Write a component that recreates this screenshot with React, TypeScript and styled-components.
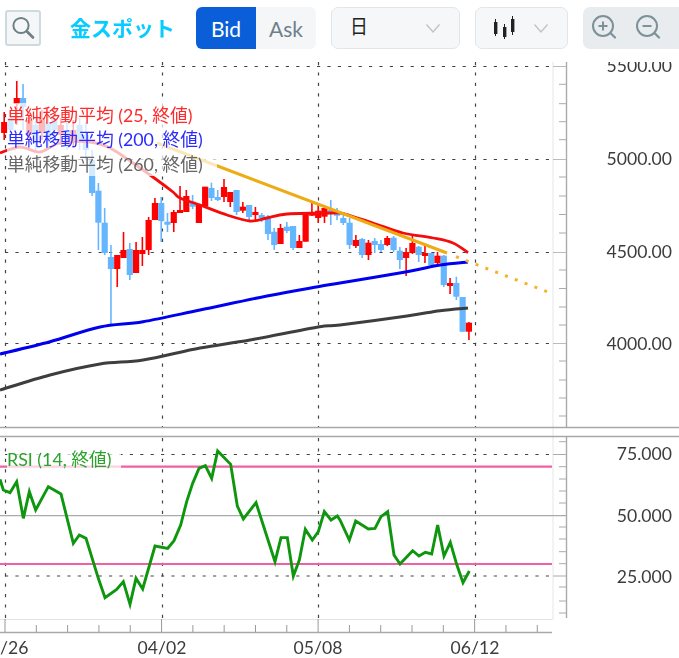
import React from "react";
import styled, { createGlobalStyle } from "styled-components";

const Global = createGlobalStyle`
  html, body { margin: 0; padding: 0; background: #fff; overflow: hidden; }
  #root { width: 679px; height: 658px; }
`;

const LATIN = `Lato, "Noto Sans CJK JP", sans-serif`;

const Page = styled.div`
  width: 679px;
  height: 658px;
  display: flex;
  flex-direction: column;
  font-family: ${LATIN};
  filter: blur(0.5px);
`;

const Toolbar = styled.div`
  height: 62px;
  flex: none;
  box-sizing: border-box;
  padding: 7px 0 0 5px;
  display: flex;
  align-items: flex-start;
`;

const SearchButton = styled.div`
  width: 36px;
  height: 36px;
  margin-top: 3px;
  box-sizing: border-box;
  border: 2px solid #cddbde;
  border-radius: 3px;
  background: #f5f6f7;
  display: flex;
  align-items: center;
  justify-content: center;
`;

const Title = styled.div`
  width: 126px;
  height: 42px;
  margin-left: 29px;
  font-weight: 700;
  font-size: 21px;
  line-height: 42px;
  color: #06ccff;
  white-space: nowrap;
`;

const Segment = styled.div`
  display: flex;
  width: 120px;
  height: 42px;
  border-radius: 6px;
  overflow: hidden;
  margin-right: 15px;
`;

const SegmentItem = styled.div<{ $active?: boolean }>`
  width: 60px;
  display: flex;
  align-items: center;
  justify-content: center;
  font-size: 21px;
  background: ${(p) => (p.$active ? "#0a5fd9" : "#f5f6f7")};
  color: ${(p) => (p.$active ? "#ffffff" : "#6f7f8a")};
`;

const Select = styled.div<{ $width: number }>`
  width: ${(p) => p.$width}px;
  height: 42px;
  box-sizing: border-box;
  border: 1px solid #dfe7ea;
  border-radius: 7px;
  background: #f6f7f8;
  margin-right: 15px;
  padding: 0 18px 0 18px;
  display: flex;
  align-items: center;
  justify-content: space-between;
`;

const SelectLabel = styled.span`
  font-family: "Noto Sans CJK JP", sans-serif;
  font-size: 17px;
  line-height: 20px;
  margin-top: -4px;
  color: #222;
  transform: scale(1.05, 1.2);
  transform-origin: left center;
`;

const ZoomGroup = styled.div`
  flex: 1;
  height: 42px;
  background: #e8ecee;
  border-radius: 7px 0 0 7px;
  padding-left: 8px;
  display: flex;
  align-items: flex-start;
  gap: 18px;
`;

const ChartArea = styled.div`
  position: relative;
  flex: 1;
`;

const ChartSvg = styled.svg`
  display: block;
  width: 679px;
  height: 596px;
`;

const AxisText = styled.text`
  font-family: ${LATIN};
  font-size: 17.6px;
  fill: #3c3c3c;
`;

const Legend = styled.div`
  position: absolute;
  left: 7px;
  top: 41px;
  display: flex;
  flex-direction: column;
`;

const LegendRow = styled.div<{ $color: string }>`
  height: 24.4px;
  line-height: 24.4px;
  font-size: 17.8px;
  white-space: nowrap;
  width: fit-content;
  padding-right: 14px;
  color: ${(p) => p.$color};
  background: rgba(255, 255, 255, 0.72);
`;

const RsiLegend = styled(LegendRow)`
  position: absolute;
  left: 7px;
  top: 385px;
  padding-right: 9px;
`;

const Chevron = () => (
  <svg width="16" height="11" viewBox="0 0 16 11">
    <path d="M1.5 1.5 L8 9 L14.5 1.5" fill="none" stroke="#bcc3c6" strokeWidth="1.3" />
  </svg>
);

const ZoomIcon = ({ plus }: { plus?: boolean }) => (
  <svg width="26" height="32" viewBox="0 0 26 32" style={{ marginTop: 4 }}>
    <circle cx="12" cy="15" r="10" fill="none" stroke="#7c9298" strokeWidth="2" />
    <path d="M19.5 22 L24 26.5" stroke="#7c9298" strokeWidth="2.2" strokeLinecap="round" />
    <path d="M7.5 15 H16.5" stroke="#7c9298" strokeWidth="2" />
    {plus && <path d="M12 10.5 V19.5" stroke="#7c9298" strokeWidth="2" />}
  </svg>
);

type C = ["r" | "b", number, number, number, number];
const candles: C[] = [
  ["r", 122, 133, 112, 140], ["b", 118, 130, 110, 138], ["r", 98, 104, 81, 125], ["b", 98, 107, 84, 130],
  ["r", 120, 135, 112, 142], ["b", 125, 140, 118, 150], ["r", 118, 132, 110, 140], ["b", 122, 140, 115, 148],
  ["b", 118, 130, 108, 140], ["r", 125, 135, 118, 145], ["b", 130, 145, 120, 150], ["r", 130, 140, 120, 148],
  ["b", 125, 140, 118, 150], ["b", 135, 150, 122, 160], ["b", 160, 193, 150, 196], ["b", 190.7, 222.7, 183, 250],
  ["b", 222.7, 253, 208, 255], ["b", 257, 269, 245, 325], ["r", 255, 269, 255, 287], ["r", 250, 258, 232, 258],
  ["b", 249, 275, 243, 280], ["r", 250, 273, 242, 273], ["r", 250, 254, 237, 266], ["r", 220, 250, 217, 255],
  ["r", 203, 220, 198, 220], ["b", 203, 221, 197, 242], ["b", 221.7, 223, 213, 232], ["r", 212, 223, 210, 232],
  ["r", 210, 212.7, 186, 212.7], ["r", 196, 212, 190, 212], ["b", 201.7, 206.7, 195, 209], ["r", 205, 223, 205, 223],
  ["r", 186.7, 206.7, 186.7, 206.7], ["b", 188, 198, 182.7, 201], ["b", 197, 200, 190, 201], ["r", 187, 197, 179, 202],
  ["r", 192, 202, 192, 207], ["b", 190, 212, 190, 215], ["r", 206.7, 210.7, 202, 213], ["b", 205, 217, 205, 220],
  ["r", 212, 215, 207, 220], ["b", 215, 218, 213, 222], ["b", 216.7, 234, 215, 240], ["b", 231.7, 245, 228, 250],
  ["r", 228, 244, 224, 244], ["b", 226.7, 231, 222, 233], ["b", 226, 248, 226, 250], ["r", 241, 248, 235, 248],
  ["r", 213, 241.7, 212, 241.7], ["r", 212.7, 215, 203, 216], ["r", 210.7, 218, 203, 223], ["r", 208, 216.7, 205, 223],
  ["b", 210, 213, 200, 225], ["b", 212.7, 215, 208, 220], ["b", 218, 223, 212, 225], ["b", 222.7, 245, 218, 249],
  ["r", 240, 246, 235, 248], ["b", 239, 255, 238, 258], ["r", 242.7, 255, 240, 260], ["b", 241, 245, 238, 253],
  ["b", 244, 250, 240, 252], ["r", 238, 245, 236, 246], ["b", 237.7, 250, 236, 252], ["b", 250.7, 260, 247, 269],
  ["r", 252, 258, 248, 276], ["r", 243, 253, 235, 254], ["b", 246.7, 255, 246, 262], ["r", 253, 255.6, 245, 263],
  ["b", 253, 265, 253, 266], ["r", 255.7, 263, 252, 265], ["b", 255.7, 285, 255, 287], ["r", 283, 286, 278, 294],
  ["b", 283, 296.7, 276.7, 300], ["b", 297, 331.7, 297, 332], ["r", 322.7, 331.7, 322, 340],
];

const pts = (a: number[][]) => a.map((p) => p.join(",")).join(" ");

const smooth = (a: number[][]) => {
  let d = `M${a[0][0]} ${a[0][1]}`;
  for (let i = 0; i < a.length - 1; i++) {
    const p0 = a[Math.max(i - 1, 0)];
    const p1 = a[i];
    const p2 = a[i + 1];
    const p3 = a[Math.min(i + 2, a.length - 1)];
    const c1x = p1[0] + (p2[0] - p0[0]) / 6;
    const c1y = p1[1] + (p2[1] - p0[1]) / 6;
    const c2x = p2[0] - (p3[0] - p1[0]) / 6;
    const c2y = p2[1] - (p3[1] - p1[1]) / 6;
    d += ` C${c1x} ${c1y} ${c2x} ${c2y} ${p2[0]} ${p2[1]}`;
  }
  return d;
};

const red = [[0,153],[20,147],[40,152],[60,143],[90,142],[110,148],[133,163],[157,180],[173,192],[180,198],[200,205],[227,215],[250,221],[267,218],[287,214],[333,213],[345,214],[373,223],[403,233],[433,238],[453,243],[468,252.7]];
const blue = [[0,354],[50,341.7],[100,327],[143,321.7],[200,310],[267,296],[318,286.7],[340,283],[407,271.7],[440,265],[468,262]];
const black = [[0,390],[50,375],[100,364],[143,360],[200,348],[250,340],[318,327],[340,325],[407,316],[440,310.7],[468,308]];

const rsiRaw = [[0,178],[10,210],[30,218],[50,185],[70,295],[88,215],[107,270],[145,200],[183,222],[220,370],[238,345],[258,355],[295,475],[315,533],[350,508],[370,485],[390,553],[408,475],[428,507],[465,378],[503,385],[522,362],[542,315],[560,245],[578,190],[597,145],[616,137],[635,175],[653,93],[692,133],[712,258],[730,297],[768,248],[825,425],[843,353],[862,353],[880,468],[898,420],[916,328],[937,360],[955,335],[973,275],[993,300],[1012,288]];
const rsiRaw2 = [[0,300],[28,360],[47,303],[85,327],[105,325],[123,290],[143,275],[162,405],[180,432],[218,392],[237,408],[256,397],[275,402],[293,315],[312,408],[331,367],[350,433],[369,488],[388,453]];
const rsi = [
  ...rsiRaw.map(([x, y]) => [x / 3, 420 + y / 3]),
  ...rsiRaw2.map(([x, y]) => [340 + x / 3, 420 + y / 3]),
];

const gridX = [5, 162, 318, 475];
const mainTicks = [84.3, 103.7, 121.7, 139.7, 177, 196, 214.5, 233, 270, 288.5, 307, 325, 361, 380, 398, 416];
const rsiTicks = [441.7, 466.7, 479, 491, 503, 527, 539, 551.7, 563.7, 587, 601, 613];
const xTicks = Array.from({ length: 18 }, (_, i) => 5 + i * 31.31);

const Dash = { stroke: "#444", strokeWidth: 1.2, strokeDasharray: "3.2 7.2" };

export default function App() {
  return (
    <Page>
      <Global />
      <Toolbar>
        <SearchButton>
          <svg width="26" height="26" viewBox="0 0 26 26">
            <circle cx="11" cy="10.5" r="7.6" fill="none" stroke="#6d8086" strokeWidth="2" />
            <path d="M17 16.5 L23 22.5" stroke="#6d8086" strokeWidth="2.6" strokeLinecap="round" />
          </svg>
        </SearchButton>
        <Title>金スポット</Title>
        <Segment>
          <SegmentItem $active>Bid</SegmentItem>
          <SegmentItem>Ask</SegmentItem>
        </Segment>
        <Select $width={129}>
          <SelectLabel>日</SelectLabel>
          <Chevron />
        </Select>
        <Select $width={93}>
          <svg width="22" height="24" viewBox="0 0 22 24">
            <path d="M1.5 3 V20 M10.5 8 V23 M18.5 0 V19" stroke="#222" strokeWidth="1" />
            <rect x="0" y="6" width="3.4" height="12" fill="#222" />
            <rect x="9" y="11" width="3.4" height="10" fill="#222" />
            <rect x="17" y="3" width="3.4" height="13" fill="#222" />
          </svg>
          <Chevron />
        </Select>
        <ZoomGroup>
          <ZoomIcon plus />
          <ZoomIcon />
        </ZoomGroup>
      </Toolbar>
      <ChartArea>
        <ChartSvg viewBox="0 62 679 596">
          <path d="M553 62 V620" stroke="#e6e6e6" />
          {[66, 159, 252, 343].map((y) => (
            <g key={y}>
              <path d={`M5 ${y}.5 H553`} {...Dash} />
              <path d={`M553 ${y}.5 H567`} stroke="#bbb" />
            </g>
          ))}
          {gridX.map((x) => (
            <g key={x}>
              <path d={`M${x}.5 62 V427`} {...Dash} />
              <path d={`M${x}.5 438 V619`} {...Dash} />
            </g>
          ))}
          <path d="M566.5 62 V427 M566.5 436 V618" stroke="#aaa" strokeWidth="1.4" />
          {mainTicks.map((y) => (
            <path key={y} d={`M559 ${y} H567`} stroke="#aaa" />
          ))}
          {rsiTicks.map((y) => (
            <path key={y} d={`M559 ${y} H567`} stroke="#aaa" />
          ))}
          {candles.map(([t, top, bot, wt, wb], i) => {
            const x = 4.2 + 6.28 * i;
            const c = t === "r" ? "#ff0000" : "#66b6ff";
            return (
              <g key={i}>
                <path d={`M${x} ${wt} V${wb}`} stroke={c} strokeWidth="1.6" />
                <rect x={x - 3.1} y={top} width={6.2} height={Math.max(bot - top, 3)} fill={c} />
              </g>
            );
          })}
          <path d={smooth(black)} fill="none" stroke="#3e3e3e" strokeWidth="3" />
          <path d={smooth(blue)} fill="none" stroke="#0000ee" strokeWidth="3" />
          <path d={smooth(red)} fill="none" stroke="#f40c0c" strokeWidth="2.8" />
          <path d="M157 143 L447 253" stroke="#eeab14" strokeWidth="3" />
          <path d="M456 256.7 L548 292" stroke="#f5b32b" strokeWidth="3" strokeDasharray="3 7.5" fill="none" />
          <path d="M0 427.5 H679 M0 436.5 H679" stroke="#a8a8a8" strokeWidth="1.3" />
          <path d="M5 454.5 H553 M5 576 H553" {...Dash} />
          <path d="M553 454.5 H567 M553 576 H567" stroke="#aaa" />
          <path d="M0 515.7 H567" stroke="#aaa" strokeWidth="1.2" />
          <path d="M0 466.7 H552 M0 564 H552" stroke="#f060a5" strokeWidth="2.2" />
          <polyline points={pts(rsi)} fill="none" stroke="#0f960f" strokeWidth="2.9" />
          <path d="M0 619.5 H552" stroke="#e4e4e4" />
          <path d="M0 632.5 H552" stroke="#aaa" strokeWidth="1.3" />
          {xTicks.map((x, i) => (
            <path key={i} d={`M${x} ${i % 5 === 0 ? 619 : 625} V632`} stroke="#999" />
          ))}
          {[["5500.00", 66], ["5000.00", 159], ["4500.00", 252], ["4000.00", 344]].map(([t, y]) => (
            <AxisText key={t} x={672} y={(y as number) + 6} textAnchor="end">{t}</AxisText>
          ))}
          {[["75.000", 454], ["50.000", 515.5], ["25.000", 576.5]].map(([t, y]) => (
            <AxisText key={t} x={672} y={(y as number) + 6} textAnchor="end">{t}</AxisText>
          ))}
          <AxisText x={0} y={654}>/26</AxisText>
          <AxisText x={162} y={654} textAnchor="middle">04/02</AxisText>
          <AxisText x={318} y={654} textAnchor="middle">05/08</AxisText>
          <AxisText x={475} y={654} textAnchor="middle">06/12</AxisText>
        </ChartSvg>
        <Legend>
          <LegendRow $color="#ff2a2a">単純移動平均 (25, 終値)</LegendRow>
          <LegendRow $color="#2a2aff">単純移動平均 (200, 終値)</LegendRow>
          <LegendRow $color="#666666">単純移動平均 (260, 終値)</LegendRow>
        </Legend>
        <RsiLegend $color="#2aa32a">RSI (14, 終値)</RsiLegend>
      </ChartArea>
    </Page>
  );
}
